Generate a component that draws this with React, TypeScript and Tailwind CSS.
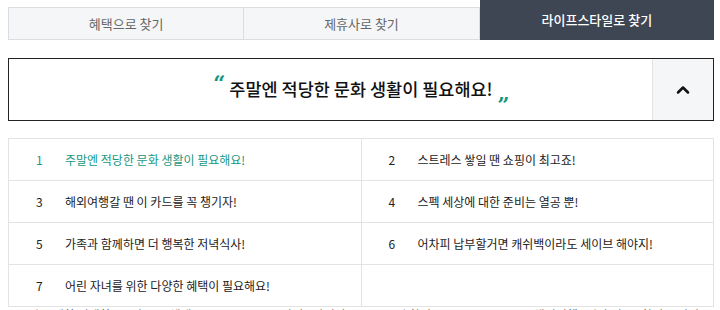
import { ChevronUp } from "lucide-react";

const items = [
  "주말엔 적당한 문화 생활이 필요해요!",
  "스트레스 쌓일 땐 쇼핑이 최고죠!",
  "해외여행갈 땐 이 카드를 꼭 챙기자!",
  "스펙 세상에 대한 준비는 열공 뿐!",
  "가족과 함께하면 더 행복한 저녁식사!",
  "어차피 납부할거면 캐쉬백이라도 세이브 해야지!",
  "어린 자녀를 위한 다양한 혜택이 필요해요!",
];

export default function App() {
  const font = { fontFamily: '"Noto Sans CJK KR", "Noto Sans", sans-serif' };
  const quote = { fontFamily: "Georgia, 'DejaVu Serif', serif" };
  return (
    <div className="w-[720px] h-[310px] overflow-hidden bg-white px-2" style={font}>
      {/* Tabs */}
      <div className="flex h-[40px] w-[706px]">
        <div className="mt-[7px] flex flex-1 items-center justify-center border border-r-0 border-[#dcdde0] bg-[#f5f6f8] text-[13px] text-[#666]">
          혜택으로 찾기
        </div>
        <div className="mt-[7px] flex flex-1 items-center justify-center border border-[#dcdde0] bg-[#f5f6f8] text-[13px] text-[#666]">
          제휴사로 찾기
        </div>
        <div className="flex flex-1 items-center justify-center bg-[#3e4653] text-[13px] font-medium text-white">
          라이프스타일로 찾기
        </div>
      </div>

      {/* Selected box */}
      <div className="mt-[18px] flex h-[63px] w-[706px] border border-[#222]">
        <div className="flex flex-1 items-center justify-center pl-[62px]">
          <span className="mr-[4px] -mt-[14px] text-[21px] font-bold leading-none text-[#14957f]" style={quote}>
            “
          </span>
          <span className="text-[17.5px] font-medium text-[#111]">주말엔 적당한 문화 생활이 필요해요!</span>
          <span className="ml-[5px] mt-[6px] text-[21px] font-bold leading-none text-[#14957f]" style={quote}>
            „
          </span>
        </div>
        <div className="flex w-[61px] items-center justify-center border-l border-[#e3e4e6] bg-[#f5f6f8]">
          <ChevronUp size={20} strokeWidth={3} className="text-[#111]" />
        </div>
      </div>

      {/* List */}
      <div className="mt-[17px] grid w-[706px] grid-cols-2 border-t border-l border-[#e3e3e3]">
        {items.map((t, i) => (
          <div
            key={i}
            className={`flex h-[42px] items-center border-b border-r border-[#e3e3e3] text-[12px] ${
              i === 0 ? "text-[#17977f]" : "text-[#222]"
            }`}
          >
            <span className="w-[56px] pl-[27px]">{i + 1}</span>
            <span>{t}</span>
          </div>
        ))}
        <div className="h-[42px] border-b border-r border-[#e3e3e3]" />
      </div>

      {/* next content, cut off by the window */}
      <div className="flex text-[12px] leading-[16px] text-[#555]">
        <span className="w-[260px]">100원 무제한 선택한 0%의 모든 혜택</span>
        <span className="w-[260px]">99라면+ 라면당 100~150원 할인</span>
        <span>*해외여행 *일반 평균 *할인% 적립</span>
      </div>
    </div>
  );
}
